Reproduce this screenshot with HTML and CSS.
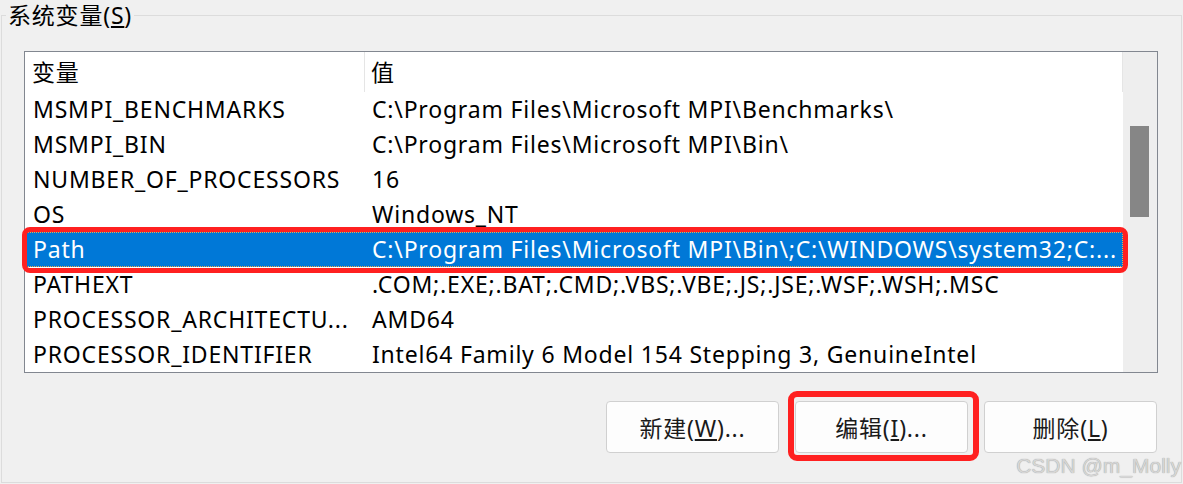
FILE: index.html
```html
<!DOCTYPE html>
<html lang="zh-CN">
<head>
    <meta charset="UTF-8">
    <title>系统变量</title>
    <link rel="stylesheet" href="styles.css">
</head>
<body>
    <fieldset class="group">
        <legend>系统变量(<u>S</u>)</legend>

        <div class="listview">
            <div class="table">
                <div class="row head">
                    <div class="c1">变量</div>
                    <div class="c2">值</div>
                </div>
                <div class="row"><div class="c1">MSMPI_BENCHMARKS</div><div class="c2">C:\Program Files\Microsoft MPI\Benchmarks\</div></div>
                <div class="row"><div class="c1">MSMPI_BIN</div><div class="c2">C:\Program Files\Microsoft MPI\Bin\</div></div>
                <div class="row"><div class="c1">NUMBER_OF_PROCESSORS</div><div class="c2">16</div></div>
                <div class="row"><div class="c1">OS</div><div class="c2">Windows_NT</div></div>
                <div class="row sel">
                    <div class="c1">Path</div><div class="c2">C:\Program Files\Microsoft MPI\Bin\;C:\WINDOWS\system32;C:...</div>
                    <span class="mark"></span>
                </div>
                <div class="row"><div class="c1">PATHEXT</div><div class="c2">.COM;.EXE;.BAT;.CMD;.VBS;.VBE;.JS;.JSE;.WSF;.WSH;.MSC</div></div>
                <div class="row"><div class="c1">PROCESSOR_ARCHITECTU...</div><div class="c2">AMD64</div></div>
                <div class="row"><div class="c1">PROCESSOR_IDENTIFIER</div><div class="c2">Intel64 Family 6 Model 154 Stepping 3, GenuineIntel</div></div>
            </div>
            <div class="scrollbar">
                <div class="thumb"></div>
            </div>
        </div>

        <div class="actions">
            <button>新建(<u>W</u>)...</button>
            <button>编辑(<u>I</u>)...<span class="mark"></span></button>
            <button>删除(<u>L</u>)</button>
        </div>
    </fieldset>

    <div class="watermark">CSDN @m_Molly</div>
</body>
</html>
```
FILE: styles.css
```css
body {
    margin: 0;
    background: #f0f0f0;
    color: #000;
    font-family: "Noto Sans", "Noto Sans CJK SC", sans-serif;
    font-size: 23px;
    letter-spacing: 0.8px;
    overflow: hidden;
    position: relative;
    height: 484px;
}

.group {
    box-sizing: border-box;
    height: 483px;
    margin: 0 1px;
    padding: 0 23px 0 22px;
    border: 1px solid #dcdcdc;
    min-width: 0;
}

.group legend {
    padding: 0 2px;
    margin-left: -18px;
    line-height: 30px;
}

.listview {
    display: flex;
    box-sizing: border-box;
    height: 322px;
    margin-top: 21px;
    border: 1px solid #828790;
    background: #fff;
}

.table {
    flex: 1;
    min-width: 0;
}

.row {
    display: flex;
    height: 35px;
    line-height: 35px;
    white-space: nowrap;
}

.c1 {
    box-sizing: border-box;
    width: 340px;
    padding-left: 8px;
    overflow: hidden;
}

.c2 {
    flex: 1;
    min-width: 0;
    padding-left: 7px;
    overflow: hidden;
}

.row.head {
    height: 40px;
    line-height: 40px;
}

.row.head .c1 {
    padding-left: 7px;
    border-right: 1px solid #e5e5e5;
}

.row.head .c2 {
    padding-left: 6px;
    border-right: 1px solid #e5e5e5;
}

.row.sel {
    position: relative;
    background: #0078d7;
    color: #fff;
    outline: 1px dotted #f2a54c;
    outline-offset: -1px;
}

.mark {
    position: absolute;
    border: 5px solid #ff2020;
    border-radius: 8px;
    pointer-events: none;
}

.row.sel .mark {
    top: -5px;
    bottom: -6px;
    left: -3px;
    right: -5px;
}

.scrollbar {
    width: 34px;
    background: #eeeeee;
}

.thumb {
    width: 19px;
    height: 91px;
    margin: 74px 0 0 7px;
    background: #868686;
}

.actions {
    display: flex;
    justify-content: flex-end;
    gap: 16px;
    margin-top: 28px;
    padding-right: 1px;
}

.actions button {
    position: relative;
    width: 173px;
    height: 52px;
    background: #fdfdfd;
    border: 1px solid #d0d0d0;
    border-radius: 4px;
    color: #1a1a1a;
    font: inherit;
    letter-spacing: inherit;
    padding: 0;
}

.actions .mark {
    top: -11px;
    bottom: -9px;
    left: -8px;
    right: -12px;
    border-width: 6px;
    border-radius: 9px;
}

.watermark {
    position: absolute;
    right: 2px;
    bottom: 6px;
    font-family: "Liberation Sans", Arial, sans-serif;
    font-size: 21px;
    letter-spacing: 0;
    color: #d6d6d6;
    text-shadow: 0 0 1px #8c8c8c;
}
```
